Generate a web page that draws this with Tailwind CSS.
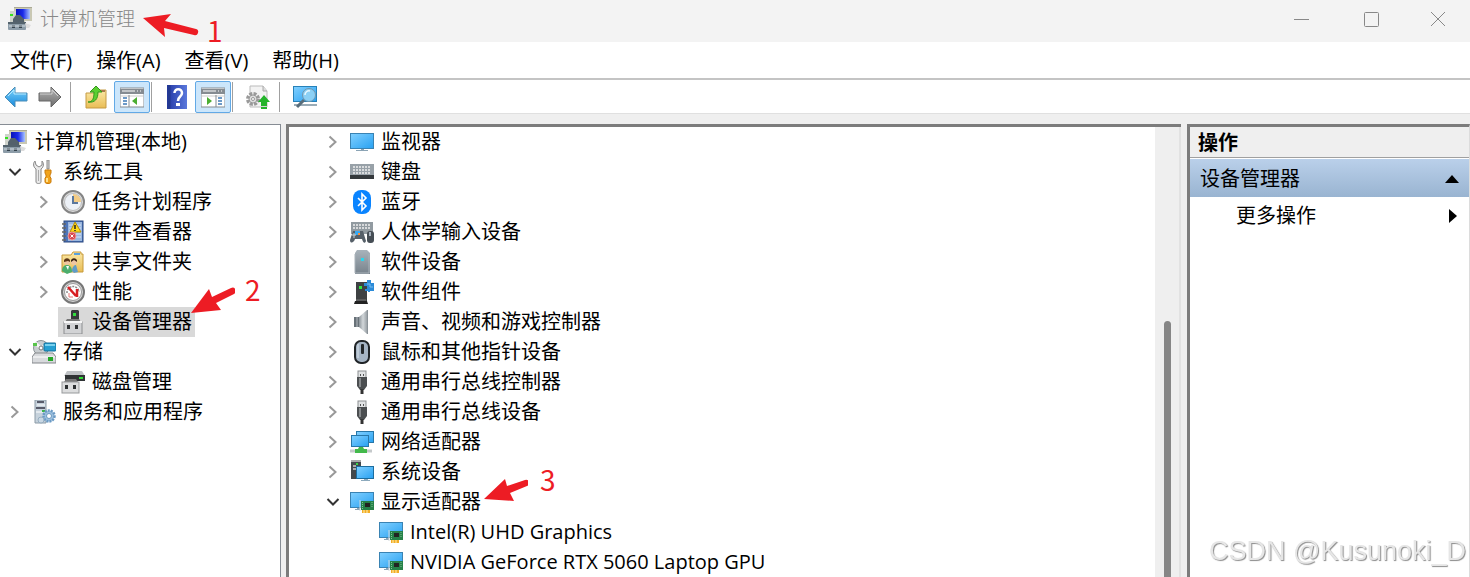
<!DOCTYPE html>
<html lang="zh-CN">

<head>
  <meta charset="UTF-8" />
  <meta name="viewport" content="width=device-width, initial-scale=1.0">
  <title>计算机管理</title>
  <script src="https://cdn.jsdelivr.net/npm/@tailwindcss/browser@4"></script>
</head>

<body class="h-screen overflow-hidden flex flex-col bg-[#efefef] text-black text-[20px] leading-[30px] whitespace-nowrap font-['Open_Sans','Noto_Sans_CJK_SC',sans-serif]">

  <!-- icon set -->
  <svg class="absolute size-0" aria-hidden="true">
    <defs>
      <linearGradient id="gScreen" x1="0" y1="0" x2="1" y2="1"><stop offset="0" stop-color="#7fcfff" /><stop offset="1" stop-color="#2aa2f2" /></linearGradient>
      <linearGradient id="gMetal" x1="0" y1="0" x2="0" y2="1"><stop offset="0" stop-color="#a9b3bb" /><stop offset="1" stop-color="#77828b" /></linearGradient>
      <linearGradient id="gNavy" x1="0" y1="0" x2="1" y2="0"><stop offset="0" stop-color="#0812b8" /><stop offset=".5" stop-color="#1a2bea" /><stop offset="1" stop-color="#a9c4ff" /></linearGradient>
      <linearGradient id="gFolder" x1="0" y1="0" x2="0" y2="1"><stop offset="0" stop-color="#fbe9a8" /><stop offset="1" stop-color="#e9bd55" /></linearGradient>
      <linearGradient id="gBlue" x1="0" y1="0" x2="0" y2="1"><stop offset="0" stop-color="#7fd4fb" /><stop offset="1" stop-color="#1789dc" /></linearGradient>
      <linearGradient id="gGray" x1="0" y1="0" x2="0" y2="1"><stop offset="0" stop-color="#b5b5b5" /><stop offset="1" stop-color="#6c6c6c" /></linearGradient>
      <linearGradient id="gHelp" x1="0" y1="0" x2="1" y2="0"><stop offset="0" stop-color="#2438a5" /><stop offset="1" stop-color="#5a78dc" /></linearGradient>
      <linearGradient id="gHorn" x1="0" y1="0" x2="1" y2="0"><stop offset="0" stop-color="#8d959b" /><stop offset=".5" stop-color="#d2d7da" /><stop offset="1" stop-color="#9ba2a7" /></linearGradient>
    </defs>
    <symbol id="right" viewBox="0 0 24 24"><path d="M8.500 6.500L14.500 12L8.500 17.500" fill="none" stroke="#999" stroke-width="2" /></symbol>
    <symbol id="down" viewBox="0 0 24 24"><path d="M6.500 9L12 14.500L17.500 9" fill="none" stroke="#333" stroke-width="2" /></symbol>
    <symbol id="computer" viewBox="0 0 24 24">
      <path d="M6 0H24V14H17V16H13V14H6Z" fill="#c9c8b4" />
      <path d="M6 0H24V1H6Z" fill="#aaa994" />
      <rect x="8" y="2" width="14" height="10" fill="url(#gNavy)" />
      <path d="M2 4H8V15H2Z" fill="#cfd3cc" /><rect x="2" y="7" width="3" height="2" fill="#35e01f" />
      <path d="M5 12L8 8H12L16 12V16H5Z" fill="#53616b" />
      <rect x="0" y="15" width="18" height="8" rx="1" fill="#8c9ca8" /><rect x="0" y="15" width="18" height="2" fill="#54636d" />
      <path d="M4 18H7V21H4ZM11 18H14V21H11Z" fill="#34424c" /><path d="M1 19H17" stroke="#d5dee3" stroke-width="1" />
      <path d="M17 16L23 18L21 21H18Z" fill="#ddd" />
    </symbol>
    <symbol id="tools" viewBox="0 0 24 24">
      <path d="M3 1C1 3 1 7 4 9V22C4 24 9 24 9 22V9C12 7 12 3 10 1V5L7 7L4 5Z" fill="#e9e9e9" stroke="#888" stroke-width="1" />
      <path d="M6.500 10V21" stroke="#aaa" /><path d="M15 0H17V9H15Z" fill="#d8d8d8" stroke="#888" />
      <path d="M13 10H19V13L18 15V17L19 18V22C19 24 13 24 13 22V18L14 17V15L13 13Z" fill="#f1a31c" stroke="#c97a0a" /><path d="M15 18V22" stroke="#ffe08a" stroke-width="2" />
    </symbol>
    <symbol id="clock" viewBox="0 0 24 24">
      <circle cx="12" cy="12" r="11" fill="#ddd" stroke="#858585" stroke-width="2" /><circle cx="12" cy="12" r="8.500" fill="#edf1f7" stroke="#bbb" />
      <path d="M12 12V4A8 8 0 0 1 20 12Z" fill="#f2cb85" /><path d="M12 6V13H17" fill="none" stroke="#5b779c" stroke-width="2" />
    </symbol>
    <symbol id="events" viewBox="0 0 24 24">
      <rect x="3" y="1" width="19" height="21" fill="#4f76ba" stroke="#28477f" /><path d="M7 2H21V21H7Z" fill="#9cb8df" />
      <path d="M8 5H20M8 8H20M8 11H20M8 14H20M8 17H20" stroke="#d7e5f8" />
      <path d="M1 4H5M1 8H5M1 12H5M1 16H5M1 20H5" stroke="#666" stroke-width="1.500" />
      <path d="M14 2L20 12H9Z" fill="#ffd91c" stroke="#b98f00" /><path d="M14 5V9M14 10V11" stroke="#222" stroke-width="1.500" />
      <circle cx="11" cy="16" r="4" fill="#d94a52" stroke="#e99" /><path d="M9.500 14.500L12.500 17.500M12.500 14.500L9.500 17.500" stroke="#fff" />
    </symbol>
    <symbol id="shared" viewBox="0 0 24 24">
      <path d="M1 5H10L12 2H20V4H22V22H1Z" fill="url(#gFolder)" stroke="#c79a3b" /><path d="M13 4H19" stroke="#58a0de" stroke-width="2" />
      <path d="M1 21C1 16 4 15 6 15C9 15 11 17 11 22L6 24Z" fill="#4cae6d" /><path d="M11 21C11 16 14 15 15 15L17 22L13 23Z" fill="#5f9cc8" />
      <circle cx="6" cy="12" r="3" fill="#efc6a3" /><path d="M3 12C2 7 10 7 9 12L7 11Z" fill="#5b3617" /><circle cx="13" cy="12" r="3" fill="#efc6a3" /><path d="M10 12C9 7 17 7 16 12L13 10Z" fill="#3a2514" /><path d="M5 16L7 20L8 16" fill="#fff" />
    </symbol>
    <symbol id="perf" viewBox="0 0 24 24">
      <circle cx="12" cy="12" r="11" fill="#d5d5d5" stroke="#777" stroke-width="2" /><circle cx="12" cy="12" r="8.500" fill="#fff" stroke="#999" />
      <path d="M6 13A6 6 0 0 1 18 12" fill="none" stroke="#888" stroke-width="1.500" stroke-dasharray="2 1" />
      <path d="M7 7L15 16M16 9V17" fill="none" stroke="#d81e23" stroke-width="2.500" /><path d="M8 13V17H12" fill="none" stroke="#e67575" />
    </symbol>
    <symbol id="device" viewBox="0 0 24 24">
      <path d="M11 0H17L18 1V10H10V1Z" fill="#36393b" /><rect x="12" y="3" width="3" height="3" fill="#31df3d" />
      <path d="M6 9H18L20 12H4Z" fill="#777" /><rect x="3" y="12" width="18" height="12" fill="#d2d3d5" stroke="#8c8e90" />
      <path d="M6 15H9V19H6ZM14 15H17V19H14Z" fill="#303234" /><path d="M3 12H21" stroke="#f7f7f7" stroke-width="2" />
    </symbol>
    <symbol id="storage" viewBox="0 0 24 24">
      <circle cx="9" cy="8" r="7.500" fill="#c8cdd0" stroke="#8c9397" /><path d="M9 8L3 3M9 8L16 4" stroke="#f5f5f5" stroke-width="3" /><circle cx="9" cy="8" r="2" fill="#fff" stroke="#777" />
      <rect x="1" y="3" width="4" height="3" fill="#58c54a" /><rect x="12" y="3" width="12" height="8" rx="1" fill="#259fd2" stroke="#126f99" /><path d="M13 4H23V6H13Z" fill="#79d1ee" />
      <path d="M3 13H21L24 17V23H0V17Z" fill="#d8dadd" stroke="#84878b" /><path d="M1 17H23" stroke="#fff" /><rect x="16" y="17" width="5" height="4" fill="#25a829" />
    </symbol>
    <symbol id="disk" viewBox="0 0 24 24">
      <path d="M6 1H21L24 6H3Z" fill="#bfc2c5" /><rect x="4" y="5" width="20" height="6" fill="#303335" /><rect x="18" y="7" width="4" height="2" fill="#31dc37" />
      <path d="M5 9H15L17 12H3Z" fill="#777" /><rect x="1" y="12" width="17" height="11" fill="#dcddde" stroke="#97999b" />
      <path d="M4 15H7V19H4ZM12 15H15V19H12Z" fill="#2d3032" />
    </symbol>
    <symbol id="services" viewBox="0 0 24 24">
      <path d="M3 0H14V23H3Z" fill="#c6d2dc" stroke="#8b9aa6" /><path d="M5 2H12" stroke="#334" stroke-width="1.500" /><path d="M4 8H13" stroke="#334" stroke-width="1.500" /><path d="M5 5H13M4 12H12" stroke="#fff" /><rect x="10" y="10" width="3" height="2" fill="#3eb449" />
      <circle cx="17" cy="16" r="5.500" fill="#9dc0df" stroke="#6b9ac4" stroke-width="2.500" stroke-dasharray="2 1" /><circle cx="17" cy="16" r="2.500" fill="#fff" stroke="#6d9ac0" /><circle cx="9" cy="20" r="3" fill="#c9d8e4" stroke="#98aec0" />
    </symbol>
    <symbol id="monitor" viewBox="0 0 24 24">
      <rect x="0" y="3" width="24" height="16" fill="#3a83b3" /><rect x="1" y="4" width="22" height="14" fill="url(#gScreen)" /><path d="M11 19H14V20H18V21H6V20H11Z" fill="#8ba4b5" />
    </symbol>
    <symbol id="keyboard" viewBox="0 0 24 24">
      <rect x="0" y="4" width="24" height="12" fill="#98a1a8" /><rect x="0" y="15" width="24" height="4" fill="#34393c" />
      <path d="M3 7H21M3 10H21M3 13H21" stroke="#eee" stroke-width="1.500" stroke-dasharray="2 1" />
    </symbol>
    <symbol id="bluetooth" viewBox="0 0 24 24">
      <rect x="3" y="0" width="18" height="24" rx="8" fill="#0a84ff" /><path d="M8 8L16 16L12 20V4L16 8L8 16" fill="none" stroke="#fff" stroke-width="1.600" />
    </symbol>
    <symbol id="hid" viewBox="0 0 24 24">
      <rect x="1" y="2" width="22" height="12" fill="#929ba1" /><path d="M3 5H21M3 8H21" stroke="#eee" stroke-width="1.500" stroke-dasharray="2 1" />
      <path d="M3 11H13L16 21C15 24 13 23 12 19H5C4 23 0 24 0 20Z" fill="#566069" /><rect x="5" y="11" width="5" height="4" fill="#36a9f3" /><rect x="8" y="13" width="2" height="2" fill="#ff8b34" />
      <path d="M4 13V18M2 15H6" stroke="#c6d0d6" /><rect x="17" y="11" width="7" height="12" rx="3" fill="#464e55" /><path d="M20 12V16" stroke="#a6b1bd" stroke-width="2" />
    </symbol>
    <symbol id="softdev" viewBox="0 0 24 24">
      <path d="M7 0H17L20 3V24H5V3Z" fill="url(#gMetal)" /><path d="M5 4V23H19V4" fill="none" stroke="#aab3ba" /><rect x="11" y="8" width="3" height="3" fill="#29d7ee" />
    </symbol>
    <symbol id="softcomp" viewBox="0 0 24 24">
      <rect x="6" y="2" width="11" height="19" fill="#3e4143" /><path d="M5 21H17L18 24H4Z" fill="#222" /><path d="M6 20H16" stroke="#777" /><rect x="9" y="6" width="3" height="3" fill="#34e946" />
      <path d="M14 3H17V0H21V3H24V11H20V12H18V11H15V9H17V6H14Z" fill="#2c8bd8" /><path d="M17 4H20V7H23" fill="none" stroke="#79beef" />
    </symbol>
    <symbol id="sound" viewBox="0 0 24 24">
      <path d="M9 7L17 0V24L9 17Z" fill="url(#gHorn)" /><path d="M4 7H9V17H4Z" fill="#687178" /><path d="M7 7V17" stroke="#b6bdc2" /><path d="M17.500 0V24" stroke="#8a9298" />
    </symbol>
    <symbol id="mouse" viewBox="0 0 24 24">
      <rect x="5" y="1" width="14" height="22" rx="6" fill="#a5b4c4" stroke="#202427" stroke-width="2" /><rect x="11" y="4" width="3" height="10" rx="1" fill="#24282b" /><path d="M8 4V18" stroke="#dae4ed" />
    </symbol>
    <symbol id="usb" viewBox="0 0 24 24">
      <rect x="8" y="1" width="8" height="8" fill="#e1e3e4" stroke="#8c8f91" /><path d="M10 4H11V6H10ZM13 4H14V6H13Z" fill="#555" />
      <path d="M7 7H17V16L14 20H10L7 16Z" fill="#4b4e50" /><path d="M10 8V17" stroke="#878a8c" stroke-width="2" /><path d="M12 19V24" stroke="#333" stroke-width="3" />
    </symbol>
    <symbol id="network" viewBox="0 0 24 24">
      <rect x="6" y="1" width="18" height="12" fill="#2877a8" /><rect x="7" y="2" width="16" height="10" fill="url(#gScreen)" />
      <rect x="1" y="5" width="18" height="12" fill="#2877a8" /><rect x="2" y="6" width="16" height="10" fill="url(#gScreen)" />
      <path d="M0 21H22" stroke="#c5c9cb" stroke-width="3" /><path d="M9 17H13L14 19H17V23H5V19H8Z" fill="#43b94b" />
    </symbol>
    <symbol id="system" viewBox="0 0 24 24">
      <rect x="1" y="1" width="10" height="18" fill="#44494c" /><path d="M1 1H11M3 6H6M3 9H6" stroke="#aaa" stroke-width="2" /><rect x="6" y="3" width="2" height="2" fill="#39d646" />
      <rect x="6" y="6" width="18" height="13" fill="#1d6d9e" /><rect x="7" y="7" width="16" height="11" fill="url(#gScreen)" /><path d="M14 19H18V20H20V21H11V20H14Z" fill="#8daabd" />
    </symbol>
    <symbol id="display" viewBox="0 0 24 24">
      <rect x="0" y="2" width="24" height="16" fill="#3a83b3" /><rect x="1" y="3" width="22" height="14" fill="url(#gScreen)" /><path d="M7 18H10V20H5V19H7Z" fill="#8ba4b5" />
      <rect x="11" y="11" width="13" height="9" fill="#268048" /><rect x="15" y="13" width="5" height="4" fill="#222" /><path d="M12.500 12V19M22 12V18" stroke="#81c595" stroke-dasharray="1 1" /><path d="M10 10V21" stroke="#d5dbdd" /><path d="M12 20H20V23H12Z" fill="#f2ad27" /><path d="M14 20V23M17 20V23" stroke="#fff0b0" />
    </symbol>
    <symbol id="back" viewBox="0 0 24 24"><path d="M1 12L11 2V8H23V16H11V22Z" fill="url(#gBlue)" stroke="#4a8db8" stroke-linejoin="round" /><path d="M4 11L10 5V9H22" fill="none" stroke="#b8eaff" /></symbol>
    <symbol id="forward" viewBox="0 0 24 24"><path d="M23 12L13 2V8H1V16H13V22Z" fill="url(#gGray)" stroke="#666" stroke-linejoin="round" /><path d="M2 9H14V5L20 11" fill="none" stroke="#d0d0d0" /></symbol>
    <symbol id="up" viewBox="0 0 24 24"><path d="M2 8H10L12 5H22V23H2Z" fill="url(#gFolder)" stroke="#c59b45" /><path d="M16 6H21" stroke="#a9794f" stroke-width="2" /><path d="M4 17C9 17 10 13 10 7H6L12 1L18 7H14C14 14 11 18 4 17Z" fill="#5bcf31" stroke="#35991c" /></symbol>
    <symbol id="treepane" viewBox="0 0 24 24"><rect x="0" y="3" width="24" height="19" fill="#fff" stroke="#858b91" /><path d="M0 4H24V9H0Z" fill="#858b91" /><path d="M2 6H15M17 6H18M20 6H21" stroke="#fff" /><path d="M1 11H23" stroke="#ccc" /><path d="M9 10V22" stroke="#858b91" /><path d="M3 13H7M3 16H7M3 19H7" stroke="#3e79b7" stroke-width="1.500" /><path d="M17 12V20L12 16Z" fill="#4cae32" /></symbol>
    <symbol id="actionpane" viewBox="0 0 24 24"><rect x="0" y="3" width="24" height="19" fill="#fff" stroke="#858b91" /><path d="M0 4H24V9H0Z" fill="#858b91" /><path d="M2 6H15M17 6H18M20 6H21" stroke="#fff" /><path d="M1 11H23" stroke="#ccc" /><path d="M15 10V22" stroke="#858b91" /><path d="M17 13H21M17 16H21M17 19H21" stroke="#3e79b7" stroke-width="1.500" /><path d="M6 12V20L11 16Z" fill="#4cae32" /></symbol>
    <symbol id="help" viewBox="0 0 24 24"><rect x="2" y="0" width="20" height="24" fill="url(#gHelp)" /><path d="M4 0V24" stroke="#233990" stroke-width="3" /><path d="M9.500 8C9.500 3 17 3 17 8C17 12 13 11 13 16" fill="none" stroke="#fff" stroke-width="2.500" /><rect x="11" y="18" width="4" height="3" fill="#fff" /></symbol>
    <symbol id="update" viewBox="0 0 24 24"><path d="M4 1H17L21 6V22H4Z" fill="#f3f3f3" stroke="#bbb" /><path d="M17 1V6H21" fill="#ddd" stroke="#aaa" /><circle cx="7" cy="14" r="5.500" fill="#eee" stroke="#999" stroke-width="3" stroke-dasharray="3 1.300" /><circle cx="7" cy="14" r="4" fill="#ddd" stroke="#999" /><circle cx="7" cy="14" r="1.500" fill="#fff" stroke="#999" /><path d="M18 10L24 17H21V19H15V17H12Z" fill="#24b42b" /><path d="M15 20H21M15 23H21" stroke="#24b42b" stroke-width="2" /></symbol>
    <symbol id="scan" viewBox="0 0 24 24"><rect x="0" y="1" width="24" height="16" fill="#2781b8" /><rect x="1" y="2" width="22" height="14" fill="url(#gScreen)" /><path d="M1 20H24" stroke="#9aabb6" stroke-width="2" /><path d="M11 15L4 22" stroke="#596d7a" stroke-width="3" /><circle cx="16" cy="10" r="6.500" fill="#8bd0f5" stroke="#7396ab" /><path d="M12 10A4 4 0 0 1 17 6" fill="none" stroke="#e7f8ff" stroke-width="1.500" /></symbol>
  </svg>

  <!-- title bar -->
  <header class="flex items-center justify-between h-[42px] shrink-0 bg-[#f3f3f3] overflow-hidden">
    <div class="relative flex items-center pl-2 pb-1">
      <svg class="size-6"><use href="#computer" /></svg>
      <h1 class="ml-2 text-[19px] font-light text-[#888]">计算机管理</h1>
      <div class="absolute left-full top-0 flex items-start pl-2 pt-2.5 text-[#ed1c24]">
        <svg class="w-14 h-6" viewBox="0 0 56 24"><path d="M0 4L28 0L22 7L53 15A3 3 0 0 1 51 21L21 14L22 23Z" fill="currentColor" /></svg>
        <span class="ml-2 mt-1 text-[28px] leading-6 font-['Noto_Sans_CJK_SC']">1</span>
      </div>
    </div>
    <div class="flex pb-1 text-[#888]">
      <button aria-label="最小化" class="flex items-center justify-center w-[70px] h-8"><svg class="size-4" viewBox="0 0 16 16"><path d="M1 8.500H16" stroke="currentColor" /></svg></button>
      <button aria-label="最大化" class="flex items-center justify-center w-[70px] h-8"><svg class="size-4" viewBox="0 0 16 16"><rect x="1.500" y="1.500" width="14" height="14" rx="1" fill="none" stroke="currentColor" /></svg></button>
      <button aria-label="关闭" class="flex items-center justify-center w-16 h-8"><svg class="size-4" viewBox="0 0 16 16"><path d="M1 1L15 15M15 1L1 15" stroke="currentColor" /></svg></button>
    </div>
  </header>

  <!-- menu -->
  <nav class="flex items-center gap-6 h-[38px] shrink-0 pl-2.5 pt-0.5 bg-white border-b-2 border-[#c4c4c4]">
    <button>文件(F)</button>
    <button>操作(A)</button>
    <button>查看(V)</button>
    <button>帮助(H)</button>
  </nav>

  <!-- toolbar -->
  <div class="flex items-center h-[34px] shrink-0 bg-white border-b border-[#e0e0e0]">
    <button aria-label="后退" class="flex items-center justify-center w-8 h-8"><svg class="size-6"><use href="#back" /></svg></button>
    <button aria-label="前进" class="ml-0.5 flex items-center justify-center w-8 h-8"><svg class="size-6"><use href="#forward" /></svg></button>
    <span class="ml-1 mr-[7px] w-px h-[30px] bg-[#a0a0a0]"></span>
    <button aria-label="上一级" class="flex items-center justify-center w-9 h-8"><svg class="size-6"><use href="#up" /></svg></button>
    <button aria-label="显示/隐藏控制台树" class="flex items-center justify-center w-9 h-8 rounded-xs border border-[#62a9e6] bg-[#cce6fb]"><svg class="size-6"><use href="#treepane" /></svg></button>
    <span class="ml-px mr-[7px] w-px h-[30px] bg-[#a0a0a0]"></span>
    <button aria-label="帮助" class="flex items-center justify-center w-9 h-8"><svg class="size-6"><use href="#help" /></svg></button>
    <button aria-label="显示/隐藏操作窗格" class="flex items-center justify-center w-9 h-8 rounded-xs border border-[#62a9e6] bg-[#cce6fb]"><svg class="size-6"><use href="#actionpane" /></svg></button>
    <span class="ml-px mr-[7px] w-px h-[30px] bg-[#a0a0a0]"></span>
    <button aria-label="更新驱动程序" class="flex items-center justify-center w-9 h-8"><svg class="size-6"><use href="#update" /></svg></button>
    <span class="ml-[3px] mr-[7px] w-px h-[30px] bg-[#a0a0a0]"></span>
    <button aria-label="扫描检测硬件改动" class="flex items-center justify-center w-9 h-8"><svg class="size-6"><use href="#scan" /></svg></button>
  </div>

  <main class="flex flex-1 min-h-0 pt-2.5">

    <!-- console tree -->
    <aside class="w-[281px] shrink-0 bg-white border-t border-r border-[#868c94] pl-[3px] pt-0.5">
      <button class="flex items-center gap-2 h-[30px]"><svg class="size-6"><use href="#computer" /></svg>计算机管理(本地)</button>
      <ul>
        <li>
          <div class="flex items-center gap-0.5 h-[30px]">
            <button aria-label="折叠"><svg class="size-6"><use href="#down" /></svg></button>
            <button class="flex items-center gap-[7px] px-[3px]"><svg class="size-6"><use href="#tools" /></svg>系统工具</button>
          </div>
          <ul class="pl-[29px]">
            <li class="flex items-center gap-0.5 h-[30px]">
              <button aria-label="展开"><svg class="size-6"><use href="#right" /></svg></button>
              <button class="flex items-center gap-[7px] px-[3px]"><svg class="size-6"><use href="#clock" /></svg>任务计划程序</button>
            </li>
            <li class="flex items-center gap-0.5 h-[30px]">
              <button aria-label="展开"><svg class="size-6"><use href="#right" /></svg></button>
              <button class="flex items-center gap-[7px] px-[3px]"><svg class="size-6"><use href="#events" /></svg>事件查看器</button>
            </li>
            <li class="flex items-center gap-0.5 h-[30px]">
              <button aria-label="展开"><svg class="size-6"><use href="#right" /></svg></button>
              <button class="flex items-center gap-[7px] px-[3px]"><svg class="size-6"><use href="#shared" /></svg>共享文件夹</button>
            </li>
            <li class="flex items-center gap-0.5 h-[30px]">
              <button aria-label="展开"><svg class="size-6"><use href="#right" /></svg></button>
              <button class="flex items-center gap-[7px] px-[3px]"><svg class="size-6"><use href="#perf" /></svg>性能</button>
            </li>
            <li class="flex items-center h-[30px] pl-[26px]">
              <div class="relative">
                <button class="flex items-center gap-[7px] px-[3px] bg-[#d9d9d9]"><svg class="size-6"><use href="#device" /></svg>设备管理器</button>
                <div class="absolute left-full bottom-[22px] flex items-start -ml-1 text-[#ed1c24]">
                  <svg class="w-11 h-7" viewBox="0 0 44 28"><path d="M0 26L18 2L21 10L40 1A3 3 0 0 1 43 7L25 16L30 23Z" fill="currentColor" /></svg>
                  <span class="ml-2.5 -mt-2.5 text-[28px] leading-6 font-['Noto_Sans_CJK_SC']">2</span>
                </div>
              </div>
            </li>
          </ul>
        </li>
        <li>
          <div class="flex items-center gap-0.5 h-[30px]">
            <button aria-label="折叠"><svg class="size-6"><use href="#down" /></svg></button>
            <button class="flex items-center gap-[7px] px-[3px]"><svg class="size-6"><use href="#storage" /></svg>存储</button>
          </div>
          <ul class="pl-[29px]">
            <li class="flex items-center h-[30px] pl-[26px]">
              <button class="flex items-center gap-[7px] px-[3px]"><svg class="size-6"><use href="#disk" /></svg>磁盘管理</button>
            </li>
          </ul>
        </li>
        <li class="flex items-center gap-0.5 h-[30px]">
          <button aria-label="展开"><svg class="size-6"><use href="#right" /></svg></button>
          <button class="flex items-center gap-[7px] px-[3px]"><svg class="size-6"><use href="#services" /></svg>服务和应用程序</button>
        </li>
      </ul>
    </aside>

    <!-- device list -->
    <section class="flex flex-1 min-w-0 ml-[5px] bg-white border-t-3 border-l-3 border-[#7c7c7c]">
      <ul class="flex-1 min-w-0 overflow-hidden pl-8">
        <li class="flex items-center gap-0.5 h-[30px]">
          <button aria-label="展开"><svg class="size-6"><use href="#right" /></svg></button>
          <button class="flex items-center gap-[7px] px-[3px]"><svg class="size-6"><use href="#monitor" /></svg>监视器</button>
        </li>
        <li class="flex items-center gap-0.5 h-[30px]">
          <button aria-label="展开"><svg class="size-6"><use href="#right" /></svg></button>
          <button class="flex items-center gap-[7px] px-[3px]"><svg class="size-6"><use href="#keyboard" /></svg>键盘</button>
        </li>
        <li class="flex items-center gap-0.5 h-[30px]">
          <button aria-label="展开"><svg class="size-6"><use href="#right" /></svg></button>
          <button class="flex items-center gap-[7px] px-[3px]"><svg class="size-6"><use href="#bluetooth" /></svg>蓝牙</button>
        </li>
        <li class="flex items-center gap-0.5 h-[30px]">
          <button aria-label="展开"><svg class="size-6"><use href="#right" /></svg></button>
          <button class="flex items-center gap-[7px] px-[3px]"><svg class="size-6"><use href="#hid" /></svg>人体学输入设备</button>
        </li>
        <li class="flex items-center gap-0.5 h-[30px]">
          <button aria-label="展开"><svg class="size-6"><use href="#right" /></svg></button>
          <button class="flex items-center gap-[7px] px-[3px]"><svg class="size-6"><use href="#softdev" /></svg>软件设备</button>
        </li>
        <li class="flex items-center gap-0.5 h-[30px]">
          <button aria-label="展开"><svg class="size-6"><use href="#right" /></svg></button>
          <button class="flex items-center gap-[7px] px-[3px]"><svg class="size-6"><use href="#softcomp" /></svg>软件组件</button>
        </li>
        <li class="flex items-center gap-0.5 h-[30px]">
          <button aria-label="展开"><svg class="size-6"><use href="#right" /></svg></button>
          <button class="flex items-center gap-[7px] px-[3px]"><svg class="size-6"><use href="#sound" /></svg>声音、视频和游戏控制器</button>
        </li>
        <li class="flex items-center gap-0.5 h-[30px]">
          <button aria-label="展开"><svg class="size-6"><use href="#right" /></svg></button>
          <button class="flex items-center gap-[7px] px-[3px]"><svg class="size-6"><use href="#mouse" /></svg>鼠标和其他指针设备</button>
        </li>
        <li class="flex items-center gap-0.5 h-[30px]">
          <button aria-label="展开"><svg class="size-6"><use href="#right" /></svg></button>
          <button class="flex items-center gap-[7px] px-[3px]"><svg class="size-6"><use href="#usb" /></svg>通用串行总线控制器</button>
        </li>
        <li class="flex items-center gap-0.5 h-[30px]">
          <button aria-label="展开"><svg class="size-6"><use href="#right" /></svg></button>
          <button class="flex items-center gap-[7px] px-[3px]"><svg class="size-6"><use href="#usb" /></svg>通用串行总线设备</button>
        </li>
        <li class="flex items-center gap-0.5 h-[30px]">
          <button aria-label="展开"><svg class="size-6"><use href="#right" /></svg></button>
          <button class="flex items-center gap-[7px] px-[3px]"><svg class="size-6"><use href="#network" /></svg>网络适配器</button>
        </li>
        <li class="flex items-center gap-0.5 h-[30px]">
          <button aria-label="展开"><svg class="size-6"><use href="#right" /></svg></button>
          <button class="flex items-center gap-[7px] px-[3px]"><svg class="size-6"><use href="#system" /></svg>系统设备</button>
        </li>
        <li>
          <div class="flex items-center gap-0.5 h-[30px]">
            <button aria-label="折叠"><svg class="size-6"><use href="#down" /></svg></button>
            <div class="relative">
              <button class="flex items-center gap-[7px] px-[3px]"><svg class="size-6"><use href="#display" /></svg>显示适配器</button>
              <div class="absolute left-full bottom-3.5 flex items-start text-[#ed1c24]">
                <svg class="w-11 h-6" viewBox="0 0 44 24"><path d="M0 20L21 0L23 7L41 1A3 3 0 0 1 43 7L26 14L30 22Z" fill="currentColor" /></svg>
                <span class="ml-3 -mt-3 text-[28px] leading-6 font-['Noto_Sans_CJK_SC']">3</span>
              </div>
            </div>
          </div>
          <ul class="pl-[55px]">
            <li class="flex items-center h-[30px]">
              <button class="flex items-center gap-[7px] px-[3px]"><svg class="size-6"><use href="#display" /></svg>Intel(R) UHD Graphics</button>
            </li>
            <li class="flex items-center h-[30px]">
              <button class="flex items-center gap-[7px] px-[3px]"><svg class="size-6"><use href="#display" /></svg>NVIDIA GeForce RTX 5060 Laptop GPU</button>
            </li>
          </ul>
        </li>
      </ul>
      <div class="w-[26px] shrink-0 pl-[9px] pt-[194px] bg-[#efefef] border-r-2 border-[#e2e2e2]">
        <div class="w-[7px] h-full rounded-t-sm bg-[#868686]"></div>
      </div>
    </section>

    <!-- actions -->
    <aside class="w-[283px] shrink-0 ml-1.5 bg-white border-t-3 border-l-3 border-r border-t-[#7c7c7c] border-l-[#7c7c7c] border-r-[#dcdcdc]">
      <h2 class="h-[31px] pl-2 pt-px bg-[#efefef] border-b border-[#a0a0a0] font-bold">操作</h2>
      <button class="flex items-center justify-between w-full h-[38px] mt-px pt-0.5 pl-2.5 pr-2.5 bg-linear-to-b from-[#bad0ea] to-[#99b4d1]">
        设备管理器
        <svg class="w-3.5 h-2" viewBox="0 0 14 8"><path d="M0 8L7 0L14 8Z" /></svg>
      </button>
      <button class="flex items-center justify-between w-full h-[38px] pl-[46px] pr-3">
        更多操作
        <svg class="w-2 h-3.5" viewBox="0 0 8 14"><path d="M0 0L8 7L0 14Z" /></svg>
      </button>
    </aside>
  </main>

  <div class="fixed right-1 bottom-2.5 text-[27px] leading-8 text-[#e6e6e6] [text-shadow:1px_1px_1px_#8c8c8c] font-['Liberation_Sans',sans-serif]">CSDN @Kusunoki_D</div>
</body>

</html>
